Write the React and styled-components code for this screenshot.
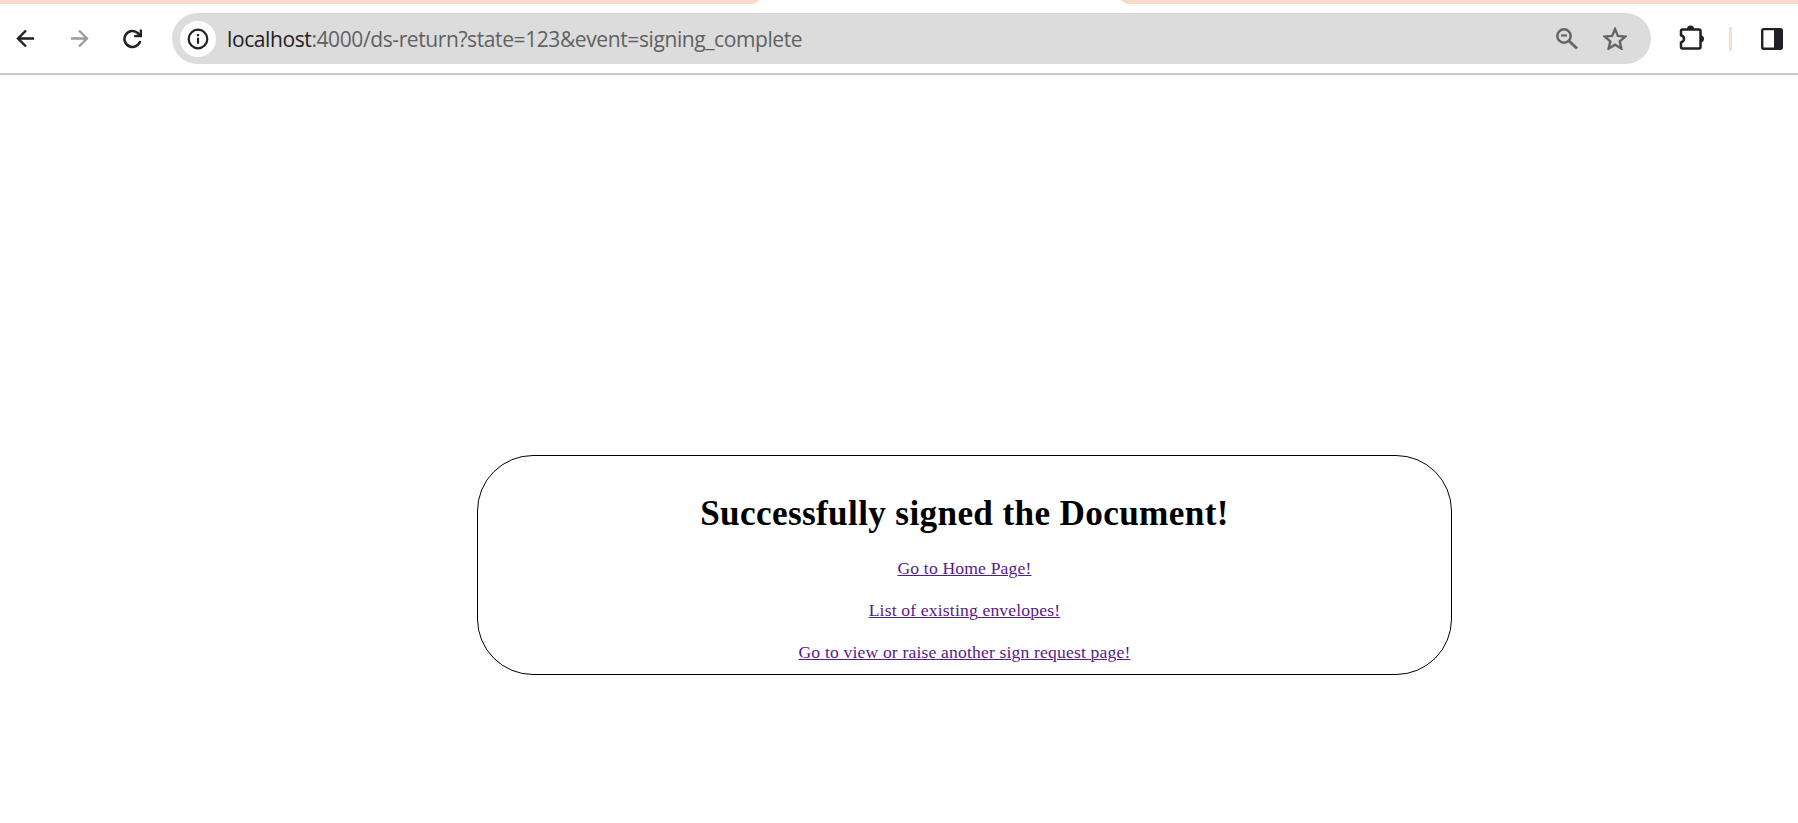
import React from "react";
import styled, { createGlobalStyle } from "styled-components";

const GlobalStyle = createGlobalStyle`
  * { box-sizing: border-box; }
  body { margin: 0; background: #fff; overflow: hidden; }
`;

const Window = styled.div`
  display: flex;
  flex-direction: column;
  height: 823px;
  background: #fff;
`;

const TabStrip = styled.div`
  display: flex;
  justify-content: space-between;
  height: 4px;
  background: #fff;
`;

const StripSegment = styled.div`
  width: ${(p) => p.$width}px;
  height: 4px;
  background: #fddbca;
  clip-path: ${(p) =>
    p.$side === "left"
      ? "polygon(0 0, 100% 0, calc(100% - 3px) 2px, calc(100% - 7px) 4px, 3px 4px, 0 4px)"
      : "polygon(0 0, 100% 0, 100% 4px, 7px 4px, 3px 2px)"};
`;

const Toolbar = styled.header`
  display: flex;
  align-items: center;
  height: 71px;
  padding: 0 15px 0 16px;
  border-bottom: 2px solid #c9c9c9;
`;

const NavButtons = styled.nav`
  display: flex;
  align-items: center;
  gap: 34.5px;
  width: 156px;
`;

const IconButton = styled.button`
  display: flex;
  padding: 0;
  border: 0;
  background: none;
  color: ${(p) => p.$color || "#202124"};
`;

const AddressBar = styled.div`
  display: flex;
  align-items: center;
  width: 1479px;
  height: 51px;
  padding: 0 24px 0 8px;
  border-radius: 26px;
  background: #dcdcdc;
`;

const SiteInfo = styled.span`
  display: flex;
  align-items: center;
  justify-content: center;
  width: 36px;
  height: 36px;
  border-radius: 50%;
  background: #fff;
  color: #202124;
`;

const Url = styled.div`
  flex: 1;
  margin-left: 11px;
  font: 21px/30px "Open Sans", "Noto Sans", sans-serif;
  letter-spacing: -0.4px;
  color: #5f6163;
  white-space: nowrap;
`;

const Host = styled.span`
  color: #1f2023;
`;

const BarActions = styled.div`
  display: flex;
  align-items: center;
  gap: 25px;
`;

const ToolbarActions = styled.div`
  display: flex;
  align-items: center;
  justify-content: space-between;
  width: 104px;
  margin-left: 28px;
`;

const Divider = styled.span`
  width: 3px;
  height: 24px;
  margin-right: 5px;
  border-radius: 1px;
  background: #fddbca;
`;

const Page = styled.main`
  flex: 1;
  padding: 380px 346px 0 477px;
`;

const Card = styled.section`
  display: flex;
  flex-direction: column;
  align-items: center;
  height: 220px;
  padding-top: 37px;
  border: 1px solid #000;
  border-radius: 56px;
  font-family: "Liberation Serif", "Times New Roman", serif;
`;

const Title = styled.h1`
  margin: 0 0 24px;
  font-size: 35.2px;
  line-height: 41px;
  font-weight: 700;
  letter-spacing: 0.35px;
  color: #000;
  white-space: nowrap;
`;

const Links = styled.div`
  display: flex;
  flex-direction: column;
  align-items: center;
  gap: 22px;
`;

const PageLink = styled.a`
  font-size: 17.6px;
  line-height: 20px;
  letter-spacing: 0.165px;
  color: #551a8b;
  text-decoration: underline;
  text-decoration-thickness: 1px;
  white-space: nowrap;
`;

const Icon = ({ w, h, children }) => (
  <svg width={w} height={h} viewBox={`0 0 ${w} ${h}`} fill="none" stroke="currentColor">
    {children}
  </svg>
);

const Arrow = () => (
  <path d="M18 9.5H2.5M10 1.5L2 9.5L10 17.5" strokeWidth="2.4" />
);

const LINKS = [
  "Go to Home Page!",
  "List of existing envelopes!",
  "Go to view or raise another sign request page!",
];

export default function App() {
  return (
    <Window>
      <GlobalStyle />
      <TabStrip>
        <StripSegment $width={760} $side="left" />
        <StripSegment $width={678} $side="right" />
      </TabStrip>
      <Toolbar>
        <NavButtons>
          <IconButton aria-label="Back">
            <Icon w={19} h={19}><Arrow /></Icon>
          </IconButton>
          <IconButton aria-label="Forward" $color="#9c9c9c">
            <Icon w={19} h={19}><g transform="rotate(180 9.5 9.5)"><Arrow /></g></Icon>
          </IconButton>
          <IconButton aria-label="Reload">
            <Icon w={20} h={20}>
              <path d="M17.2 12A8 8 0 1 1 15 4.2L17.4 6.6" strokeWidth="2.5" />
              <path d="M19 .5V8.2H11.2V6L13.5 5.7H16.7V.5Z" fill="currentColor" stroke="none" />
            </Icon>
          </IconButton>
        </NavButtons>
        <AddressBar>
          <SiteInfo>
            <Icon w={22} h={22}>
              <circle cx="11" cy="11" r="9.3" strokeWidth="2.2" />
              <path d="M11 9.8V15.8M11 6V8.2" strokeWidth="2.2" />
            </Icon>
          </SiteInfo>
          <Url><Host>localhost</Host>:4000/ds-return?state=123&amp;event=signing_complete</Url>
          <BarActions>
            <IconButton aria-label="Zoom" $color="#646668">
              <Icon w={22} h={23}>
                <circle cx="8" cy="9" r="6.7" strokeWidth="2.5" />
                <path d="M12.8 13.8L21 21.5" strokeWidth="2.9" />
                <path d="M5 8.5H11" strokeWidth="2.2" />
              </Icon>
            </IconButton>
            <IconButton aria-label="Bookmark" $color="#646668">
              <svg width="24" height="23" viewBox="2 2 20 19" fill="currentColor">
                <path
                  d="M12 3.6L14.4 9.3L20.6 9.85L15.9 13.9L17.3 19.9L12 16.7L6.7 19.9L8.1 13.9L3.4 9.85L9.6 9.3Z"
                  fill="none"
                  stroke="currentColor"
                  strokeWidth="2"
                />
              </svg>
            </IconButton>
          </BarActions>
        </AddressBar>
        <ToolbarActions>
          <IconButton aria-label="Extensions">
            <Icon w={26} h={27}>
              <path
                d="M3.5 4.5H20Q21.5 4.5 21.5 6V22Q21.5 23.5 20 23.5H3.5Q2 23.5 2 22V17.5Q5 16.5 5 13.8Q5 11.2 2 10.2V6Q2 4.5 3.5 4.5Z"
                strokeWidth="2.5"
              />
              <path d="M8 4A3.6 3.6 0 0 1 15.2 4ZM22 10.3A3.6 3.6 0 0 1 22 17.4Z" fill="currentColor" stroke="none" />
            </Icon>
          </IconButton>
          <Divider />
          <IconButton aria-label="Side panel">
            <Icon w={22} h={23}>
              <rect x="1.2" y="2.1" width="19.6" height="19.6" rx="1.5" strokeWidth="2.4" />
              <path d="M13 2H20V22H13Z" fill="currentColor" stroke="none" />
            </Icon>
          </IconButton>
        </ToolbarActions>
      </Toolbar>
      <Page>
        <Card>
          <Title>Successfully signed the Document!</Title>
          <Links>
            {LINKS.map((label) => (
              <PageLink key={label} href="#">{label}</PageLink>
            ))}
          </Links>
        </Card>
      </Page>
    </Window>
  );
}
